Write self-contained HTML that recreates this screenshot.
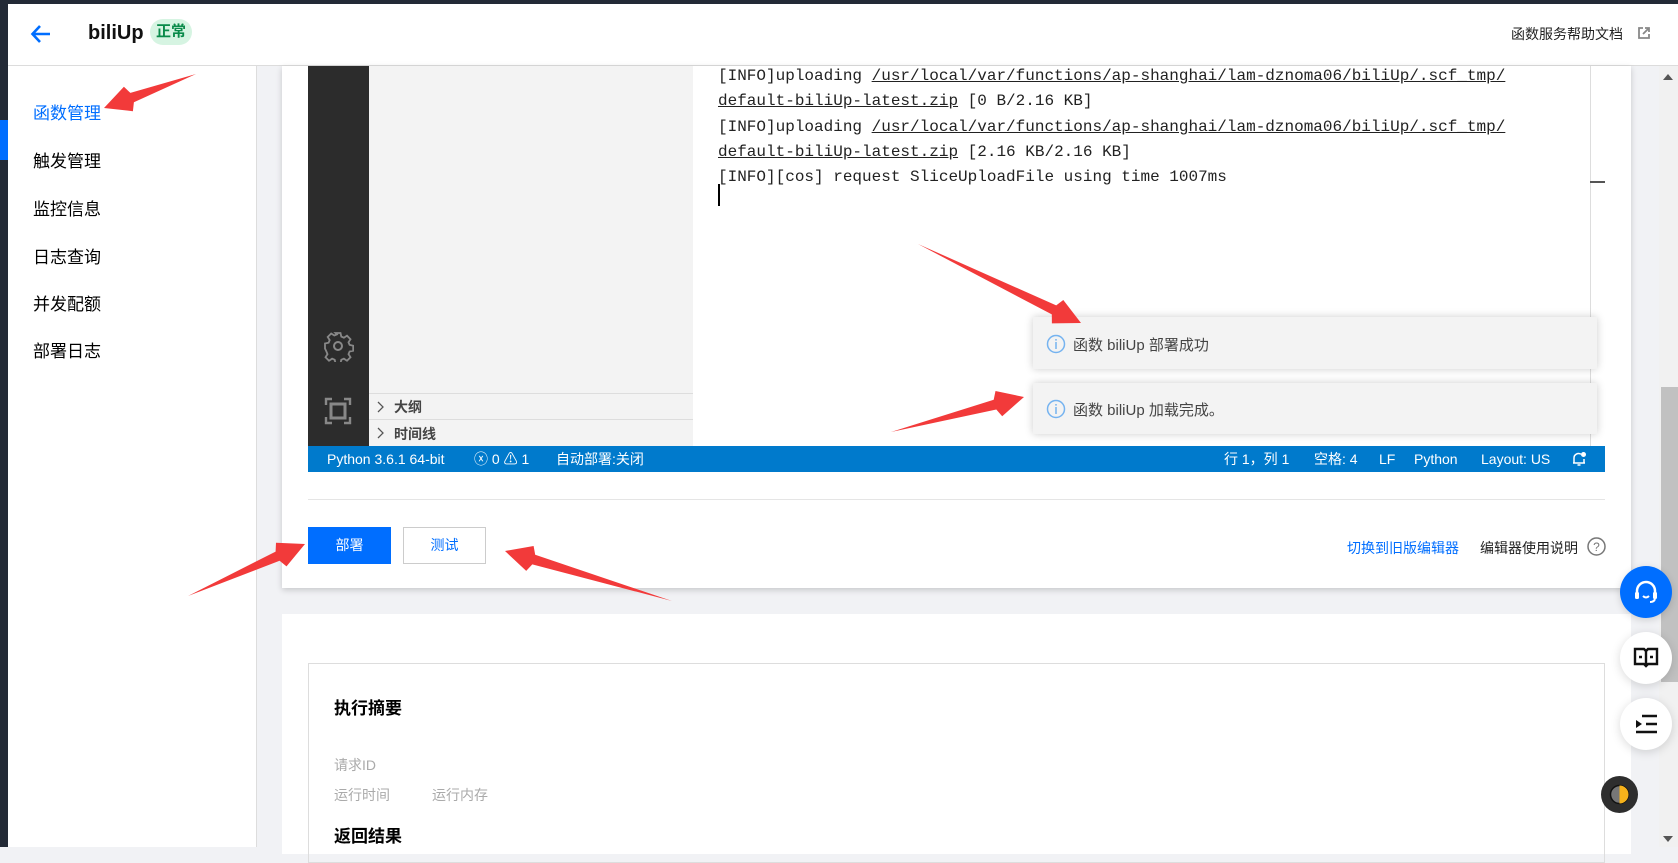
<!DOCTYPE html>
<html><head><meta charset="utf-8"><style>
*{margin:0;padding:0;box-sizing:border-box}
body{width:1678px;height:847px;overflow:hidden;background:#f1f2f5;font-family:"Liberation Sans","Noto Sans CJK SC",sans-serif;position:relative;color:#000}
.abs{position:absolute}
.mono{font-family:"Liberation Mono","Noto Sans CJK SC",monospace}
.sb span{position:absolute;top:0}
</style></head><body>
<div class="abs" style="left:0;top:0;width:1678px;height:4px;background:#232a36"></div>
<div class="abs" style="left:0;top:0;width:8px;height:847px;background:#232a36"></div>
<div class="abs" style="left:0;top:120px;width:8px;height:40px;background:#006eff"></div>
<!-- header -->
<div class="abs" style="left:8px;top:4px;width:1670px;height:62px;background:#fff;border-bottom:1px solid #dcdcdc"></div>
<svg class="abs" style="left:30px;top:23px" width="22" height="22" viewBox="0 0 22 22"><path d="M20 11H3M10 3L2.5 11 10 19" stroke="#006eff" stroke-width="2.6" fill="none"/></svg>
<div class="abs" style="left:88px;top:22px;font-size:20px;font-weight:bold;color:#111">biliUp</div>
<div class="abs" style="left:150px;top:19px;width:42px;height:26px;border-radius:13px;background:#d6f4e2;color:#0a8a4a;font-size:15px;font-weight:bold;text-align:center;line-height:26px">正常</div>
<div class="abs" style="left:1511px;top:24px;font-size:14px;color:#222">函数服务帮助文档</div>
<svg class="abs" style="left:1637px;top:26px" width="14" height="14" viewBox="0 0 14 14"><path d="M6 2H2v10h10V8M8 2h4v4M12 2L6 8" stroke="#888" stroke-width="1.8" fill="none"/></svg>
<!-- sidebar -->
<div class="abs" style="left:8px;top:66px;width:249px;height:781px;background:#fff;border-right:1px solid #ddd"></div>
<div class="abs" style="left:33px;top:103px;font-size:17px;line-height:22px;color:#006eff">函数管理</div>
<div class="abs" style="left:33px;top:151px;font-size:17px;line-height:22px">触发管理</div>
<div class="abs" style="left:33px;top:199px;font-size:17px;line-height:22px">监控信息</div>
<div class="abs" style="left:33px;top:247px;font-size:17px;line-height:22px">日志查询</div>
<div class="abs" style="left:33px;top:294px;font-size:17px;line-height:22px">并发配额</div>
<div class="abs" style="left:33px;top:341px;font-size:17px;line-height:22px">部署日志</div>
<!-- card 1 -->
<div class="abs" style="left:282px;top:66px;width:1349px;height:522px;background:#fff;box-shadow:0 2px 6px rgba(0,0,0,.18)"></div>
<div class="abs" style="left:308px;top:66px;width:61px;height:380px;background:#2c2c2c"></div>
<div class="abs" style="left:369px;top:66px;width:324px;height:380px;background:#f3f3f3"></div>
<div class="abs" style="left:369px;top:393px;width:324px;height:1px;background:#ddd"></div>
<div class="abs" style="left:369px;top:419px;width:324px;height:1px;background:#ddd"></div>
<svg class="abs" style="left:376px;top:400px" width="10" height="14"><path d="M2 2l5 5-5 5" stroke="#555" stroke-width="1.3" fill="none"/></svg>
<svg class="abs" style="left:376px;top:426px" width="10" height="14"><path d="M2 2l5 5-5 5" stroke="#555" stroke-width="1.3" fill="none"/></svg>
<div class="abs" style="left:394px;top:397px;font-size:14px;font-weight:bold;color:#444">大纲</div>
<div class="abs" style="left:394px;top:424px;font-size:14px;font-weight:bold;color:#444">时间线</div>
<svg class="abs" style="left:322px;top:330px" width="32" height="32" viewBox="0 0 32 32"><path d="M13.5 3h5l.8 3.6 2.6 1.1 3.1-2 3.5 3.5-2 3.1 1.1 2.6 3.6.8v5l-3.6.8-1.1 2.6 2 3.1-3.5 3.5-3.1-2-2.6 1.1-.8 3.6h-5l-.8-3.6-2.6-1.1-3.1 2-3.5-3.5 2-3.1-1.1-2.6L3 18.5v-5l3.6-.8 1.1-2.6-2-3.1 3.5-3.5 3.1 2 2.6-1.1z" stroke="#888" stroke-width="1.8" fill="none"/><circle cx="16" cy="16" r="4" stroke="#888" stroke-width="2" fill="none"/></svg>
<svg class="abs" style="left:324px;top:397px" width="28" height="28" viewBox="0 0 28 28"><path d="M2 8V2h6M20 2h6v6M26 20v6h-6M8 26H2v-6" stroke="#888" stroke-width="2.4" fill="none"/><rect x="7" y="7" width="14" height="14" stroke="#888" stroke-width="3" fill="none"/></svg>
<div class="abs" style="left:693px;top:66px;width:897px;height:380px;background:#fff"></div>
<div class="abs" style="left:1590px;top:66px;width:1px;height:380px;background:#ddd"></div>
<div class="abs" style="left:1590px;top:181px;width:15px;height:2px;background:#555"></div>
<div class="abs mono" style="left:718px;top:64px;font-size:16px;line-height:25.3px;color:#222;white-space:pre">[INFO]uploading <u>/usr/local/var/functions/ap-shanghai/lam-dznoma06/biliUp/.scf_tmp/</u>
<u>default-biliUp-latest.zip</u> [0 B/2.16 KB]
[INFO]uploading <u>/usr/local/var/functions/ap-shanghai/lam-dznoma06/biliUp/.scf_tmp/</u>
<u>default-biliUp-latest.zip</u> [2.16 KB/2.16 KB]
[INFO][cos] request SliceUploadFile using time 1007ms</div>
<div class="abs" style="left:718px;top:184px;width:2px;height:22px;background:#000"></div>
<!-- notifications -->
<div class="abs" style="left:1033px;top:317px;width:564px;height:52px;background:#f3f3f3;box-shadow:0 0 8px rgba(0,0,0,.2)"></div>
<div class="abs" style="left:1033px;top:383px;width:564px;height:51px;background:#f3f3f3;box-shadow:0 0 8px rgba(0,0,0,.2)"></div>
<svg class="abs" style="left:1046px;top:334px" width="20" height="20"><circle cx="10" cy="10" r="8.5" stroke="#75b3f0" stroke-width="1.5" fill="none"/><path d="M10 8v7M10 5v1.6" stroke="#75b3f0" stroke-width="1.5"/></svg>
<div class="abs" style="left:1073px;top:334px;font-size:15px;color:#444">函数 biliUp 部署成功</div>
<svg class="abs" style="left:1046px;top:399px" width="20" height="20"><circle cx="10" cy="10" r="8.5" stroke="#75b3f0" stroke-width="1.5" fill="none"/><path d="M10 8v7M10 5v1.6" stroke="#75b3f0" stroke-width="1.5"/></svg>
<div class="abs" style="left:1073px;top:399px;font-size:15px;color:#444">函数 biliUp 加载完成。</div>
<!-- status bar -->
<div class="abs sb" style="left:308px;top:446px;width:1297px;height:26px;background:#007acc;color:#fff;font-size:14px;line-height:26px;white-space:pre"><span style="left:19px">Python 3.6.1 64-bit</span><span style="left:166px">ⓧ 0 ⚠ 1</span><span style="left:248px">自动部署:关闭</span><span style="left:916px">行 1，列 1</span><span style="left:1006px">空格: 4</span><span style="left:1071px">LF</span><span style="left:1106px">Python</span><span style="left:1173px">Layout: US</span></div>
<svg class="abs" style="left:1571px;top:451px" width="16" height="16" viewBox="0 0 16 16"><path d="M3 12V7a4.5 4.5 0 0 1 7-3.7M13 8v4M2 12h12M6.5 14h3" stroke="#fff" stroke-width="1.5" fill="none"/><circle cx="12.5" cy="3.5" r="2.5" fill="#fff"/></svg>
<div class="abs" style="left:308px;top:499px;width:1297px;height:1px;background:#e5e5e5"></div>
<div class="abs" style="left:308px;top:527px;width:83px;height:37px;background:#006eff;color:#fff;font-size:14px;text-align:center;line-height:37px">部署</div>
<div class="abs" style="left:403px;top:527px;width:83px;height:37px;background:#fff;border:1px solid #ccc;color:#006eff;font-size:14px;text-align:center;line-height:35px">测试</div>
<div class="abs" style="left:1347px;top:538px;font-size:14px;color:#006eff">切换到旧版编辑器</div>
<div class="abs" style="left:1480px;top:538px;font-size:14px;color:#222">编辑器使用说明</div>
<svg class="abs" style="left:1587px;top:537px" width="19" height="19"><circle cx="9.5" cy="9.5" r="8.5" stroke="#777" stroke-width="1.5" fill="none"/><text x="9.5" y="14" font-size="12" text-anchor="middle" fill="#777" font-family="Liberation Sans">?</text></svg>
<!-- card 2 -->
<div class="abs" style="left:282px;top:614px;width:1349px;height:240px;background:#fff"></div>
<div class="abs" style="left:308px;top:663px;width:1297px;height:200px;border:1px solid #ddd"></div>
<div class="abs" style="left:334px;top:694px;font-size:17px;font-weight:bold">执行摘要</div>
<div class="abs" style="left:334px;top:755px;font-size:14px;color:#aaa">请求ID</div>
<div class="abs" style="left:334px;top:785px;font-size:14px;color:#aaa">运行时间</div>
<div class="abs" style="left:432px;top:785px;font-size:14px;color:#aaa">运行内存</div>
<div class="abs" style="left:334px;top:822px;font-size:17px;font-weight:bold">返回结果</div>
<!-- page scrollbar -->
<div class="abs" style="left:1659px;top:66px;width:19px;height:781px;background:#f1f1f1"></div>
<div class="abs" style="left:1661px;top:387px;width:17px;height:295px;background:#c1c1c1"></div>
<div class="abs" style="left:1663px;top:74px;width:0;height:0;border:5px solid transparent;border-bottom:6px solid #555;border-top:0"></div>
<div class="abs" style="left:1663px;top:836px;width:0;height:0;border:5px solid transparent;border-top:6px solid #555;border-bottom:0"></div>
<!-- floating -->
<div class="abs" style="left:1620px;top:566px;width:52px;height:52px;border-radius:50%;background:#006eff;box-shadow:0 2px 8px rgba(0,0,0,.15)"></div>
<svg class="abs" style="left:1633px;top:579px" width="26" height="26" viewBox="0 0 26 26"><path d="M4 16v-4a9 9 0 0 1 18 0v4" stroke="#fff" stroke-width="2.5" fill="none"/><rect x="2" y="13" width="4" height="7" rx="1.5" fill="#fff"/><rect x="20" y="13" width="4" height="7" rx="1.5" fill="#fff"/><path d="M10 17q3 3 6 0M22 20q-1 3-5 3" stroke="#fff" stroke-width="2" fill="none"/></svg>
<div class="abs" style="left:1620px;top:632px;width:52px;height:52px;border-radius:50%;background:#fff;box-shadow:0 2px 10px rgba(0,0,0,.15)"></div>
<svg class="abs" style="left:1633px;top:646px" width="26" height="24" viewBox="0 0 26 24"><path d="M2 3h9l2 2 2-2h9v15h-9l-2 2-2-2H2z" stroke="#111" stroke-width="2.4" fill="none"/><path d="M13 5v15M6 11h3M17 11h3" stroke="#111" stroke-width="2.4"/></svg>
<div class="abs" style="left:1620px;top:698px;width:52px;height:52px;border-radius:50%;background:#fff;box-shadow:0 2px 10px rgba(0,0,0,.15)"></div>
<svg class="abs" style="left:1634px;top:713px" width="24" height="22" viewBox="0 0 24 22"><path d="M8 3h15M12 11h11M2 19h21" stroke="#111" stroke-width="2.4"/><path d="M2 7l6 4-6 4z" fill="#111"/></svg>
<div class="abs" style="left:1601px;top:776px;width:37px;height:37px;border-radius:50%;background:#2e2e2e"></div>
<svg class="abs" style="left:1609px;top:784px" width="21" height="21"><circle cx="10.5" cy="10.5" r="9" fill="#777" stroke="#111" stroke-width="1.5"/><path d="M10.5 1.5a9 9 0 0 1 0 18z" fill="#f6b21b"/></svg>
<!-- arrows -->
<svg class="abs" style="left:0;top:0" width="1678" height="847" id="arr"></svg>
<script>
var A=[[196,74,104,108],[918,244,1081,323],[891,432,1024,397],[188,596,305,544],[672,601,505,551]];
var s='';
A.forEach(function(a){var x0=a[0],y0=a[1],x1=a[2],y1=a[3];var dx=x1-x0,dy=y1-y0,L=Math.hypot(dx,dy);var ux=dx/L,uy=dy/L,nx=-uy,ny=ux;var hl=30,hw=13,sw=5;var bx=x1-ux*hl,by=y1-uy*hl;
var p=[[x0,y0],[bx+nx*sw,by+ny*sw],[bx+nx*hw+ux*4,by+ny*hw+uy*4],[x1,y1],[bx-nx*hw+ux*4,by-ny*hw+uy*4],[bx-nx*sw,by-ny*sw]];
s+='<polygon fill="#f23a3a" points="'+p.map(function(q){return q[0].toFixed(1)+','+q[1].toFixed(1)}).join(' ')+'"/>';});
document.getElementById('arr').innerHTML=s;
</script>
</body></html>
